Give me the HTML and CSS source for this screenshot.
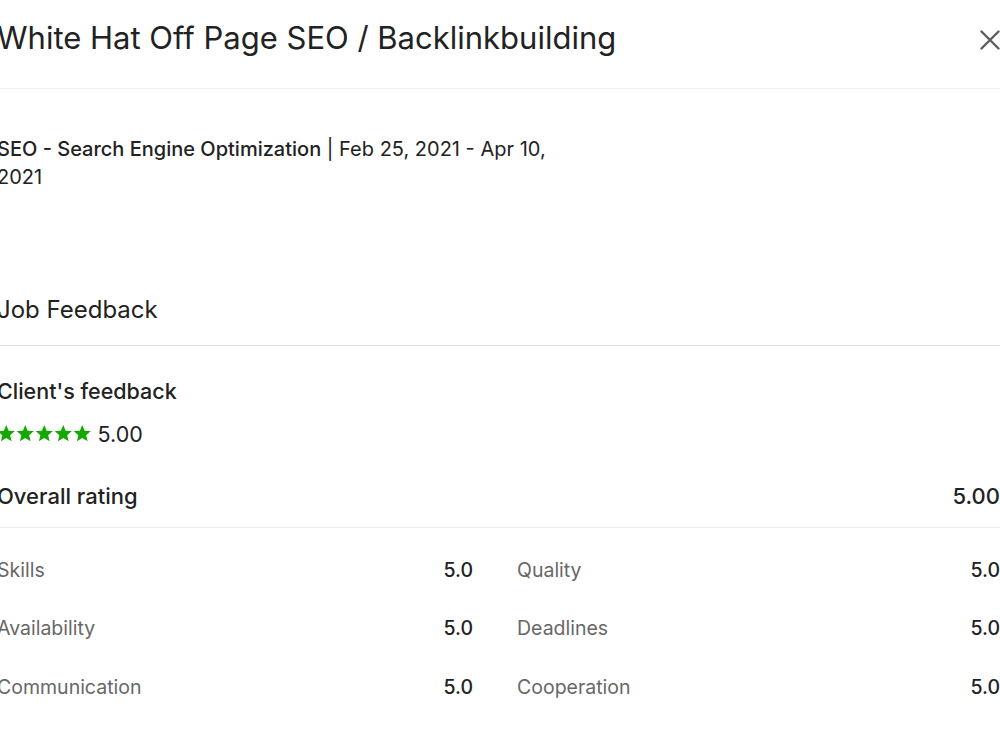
FILE: index.html
```html
<!DOCTYPE html>
<html lang="en">

<head>
    <meta charset="UTF-8">
    <meta name="viewport" content="width=device-width, initial-scale=1.0">
    <title>Job Details</title>
    <link rel="stylesheet" href="styles.css">
</head>

<body>
    <div class="modal">
        <!-- Header -->
        <div class="modal-header">
            <h2 class="title">White Hat Off Page SEO / Backlinkbuilding</h2>
            <button class="close" aria-label="Close">
                <svg width="20" height="20" viewBox="0 0 20 20">
                    <path d="M1.5 1.5 L18.5 18.5 M18.5 1.5 L1.5 18.5" stroke="#5e5e5e" stroke-width="2.4" stroke-linecap="round" />
                </svg>
            </button>
        </div>

        <p class="meta">
            <strong>SEO - Search Engine Optimization</strong> | Feb 25, 2021 - Apr 10, 2021
        </p>

        <!-- Feedback -->
        <h3 class="section-title">Job Feedback</h3>

        <div class="feedback">
            <h4 class="feedback-title">Client's feedback</h4>
            <div class="stars">
                <span class="star-row">
                    <svg viewBox="0 0 20 20"><path d="M10 1 L12.6 7.2 L19.3 7.7 L14.2 12.1 L15.8 18.7 L10 15.1 L4.2 18.7 L5.8 12.1 L0.7 7.7 L7.4 7.2 Z" /></svg>
                    <svg viewBox="0 0 20 20"><path d="M10 1 L12.6 7.2 L19.3 7.7 L14.2 12.1 L15.8 18.7 L10 15.1 L4.2 18.7 L5.8 12.1 L0.7 7.7 L7.4 7.2 Z" /></svg>
                    <svg viewBox="0 0 20 20"><path d="M10 1 L12.6 7.2 L19.3 7.7 L14.2 12.1 L15.8 18.7 L10 15.1 L4.2 18.7 L5.8 12.1 L0.7 7.7 L7.4 7.2 Z" /></svg>
                    <svg viewBox="0 0 20 20"><path d="M10 1 L12.6 7.2 L19.3 7.7 L14.2 12.1 L15.8 18.7 L10 15.1 L4.2 18.7 L5.8 12.1 L0.7 7.7 L7.4 7.2 Z" /></svg>
                    <svg viewBox="0 0 20 20"><path d="M10 1 L12.6 7.2 L19.3 7.7 L14.2 12.1 L15.8 18.7 L10 15.1 L4.2 18.7 L5.8 12.1 L0.7 7.7 L7.4 7.2 Z" /></svg>
                </span>
                <span class="score">5.00</span>
            </div>

            <div class="overall">
                <span>Overall rating</span>
                <span>5.00</span>
            </div>

            <div class="ratings">
                <div class="rating"><span class="label">Skills</span><span class="value">5.0</span></div>
                <div class="rating"><span class="label">Quality</span><span class="value">5.0</span></div>
                <div class="rating"><span class="label">Availability</span><span class="value">5.0</span></div>
                <div class="rating"><span class="label">Deadlines</span><span class="value">5.0</span></div>
                <div class="rating"><span class="label">Communication</span><span class="value">5.0</span></div>
                <div class="rating"><span class="label">Cooperation</span><span class="value">5.0</span></div>
            </div>
        </div>
    </div>
</body>

</html>
```

FILE: styles.css
```css
* {
    margin: 0;
    padding: 0;
    box-sizing: border-box;
}

body {
    background-color: #fff;
    font-family: Inter, "Liberation Sans", Arial, sans-serif;
    color: #222;
    overflow: hidden;
}

.modal {
    width: 1003px;
    margin-left: -3px;
}

/* Header */
.modal-header {
    display: flex;
    justify-content: space-between;
    align-items: flex-start;
    height: 89px;
    padding-top: 20px;
    border-bottom: 1px solid #f2f2f2;
}

.title {
    font-size: 31px;
    line-height: 36px;
    font-weight: 400;
    color: #222;
}

.close {
    background: none;
    border: none;
    width: 20px;
    height: 20px;
    margin-top: 10px;
}

.close svg {
    display: block;
}

.meta {
    max-width: 565px;
    margin-top: 46px;
    font-size: 20px;
    line-height: 28px;
    color: #222;
}

.meta strong {
    font-weight: 500;
}

/* Job feedback */
.section-title {
    margin-top: 104.5px;
    padding-bottom: 21px;
    border-bottom: 1px solid #e2e2e2;
    font-size: 24px;
    line-height: 28px;
    font-weight: 400;
}

.feedback-title {
    margin-top: 32px;
    font-size: 21.5px;
    line-height: 26px;
    font-weight: 500;
}

.stars {
    display: flex;
    align-items: center;
    gap: 6px;
    margin-top: 17px;
    height: 26px;
}

.star-row {
    display: flex;
    gap: 0.5px;
}

.star-row svg {
    width: 18.5px;
    height: 18.5px;
    fill: #14a800;
}

.score {
    font-size: 21.5px;
    line-height: 26px;
}

.overall {
    display: flex;
    justify-content: space-between;
    padding: 36px 0 18px;
    border-bottom: 1px solid #ededed;
    font-size: 22px;
    line-height: 26px;
    font-weight: 500;
}

.ratings {
    display: grid;
    grid-template-columns: 476px 1fr;
    column-gap: 44px;
    row-gap: 36.5px;
    padding-top: 31px;
}

.rating {
    display: flex;
    justify-content: space-between;
    font-size: 19.5px;
    line-height: 22px;
}

.label {
    color: #676767;
}

.value {
    font-weight: 500;
}
```
